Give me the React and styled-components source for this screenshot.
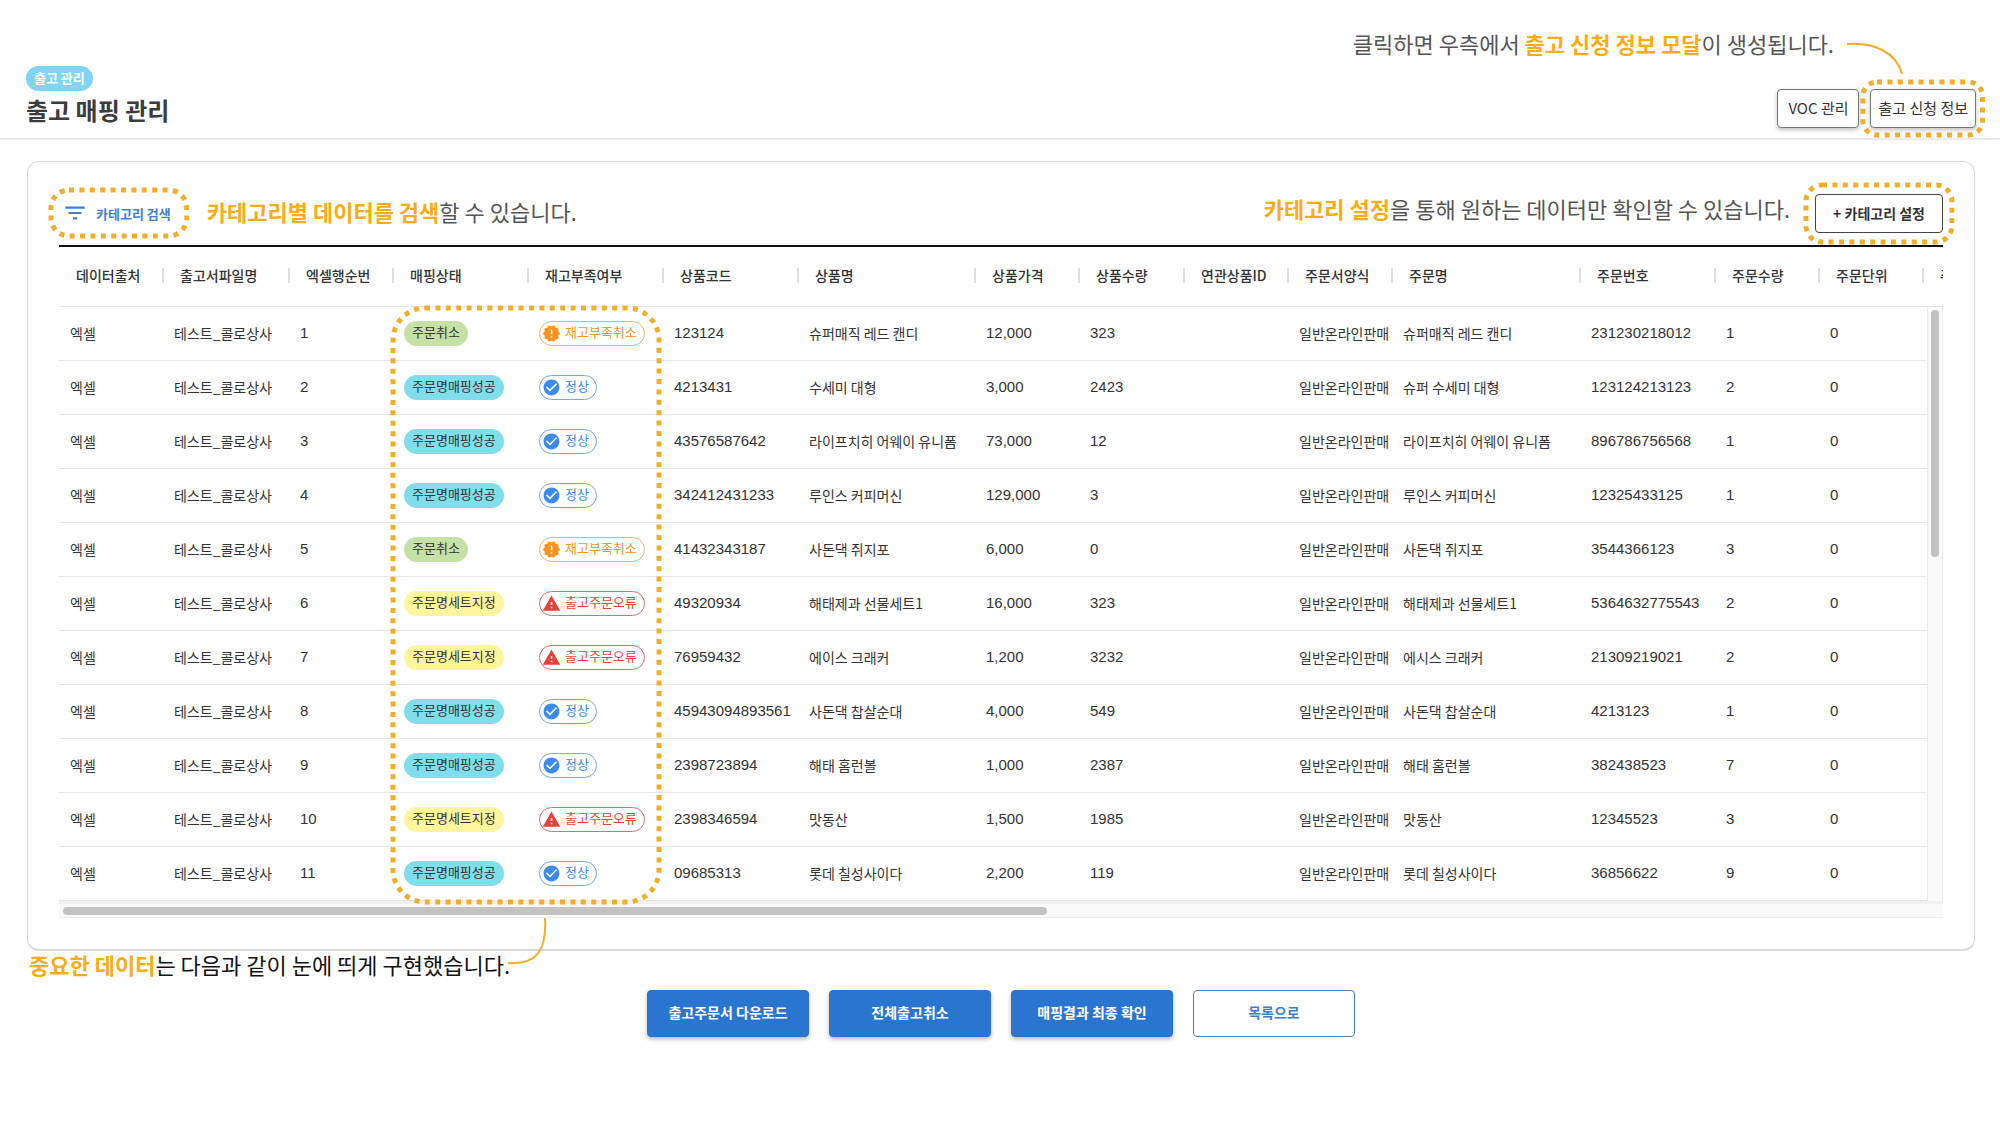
import React from 'react'
import styled, { createGlobalStyle } from 'styled-components'
import { MdCheckCircle, MdFilterList, MdNewReleases, MdWarning } from 'react-icons/md'

const colors = {
  text: '#333333',
  note: '#555555',
  accent: '#fbac14',
  dots: '#f0ae2b',
  primary: '#2a75d0',
  line: '#e6e6e8',
  track: '#fafafa',
  thumb: '#c3c3c3'
}

const columns = [
  { key: 'source', label: '데이터출처', width: 104 },
  { key: 'file', label: '출고서파일명', width: 126 },
  { key: 'row', label: '엑셀행순번', width: 104, numeric: true },
  { key: 'mapping', label: '매핑상태', width: 135, chip: true },
  { key: 'stock', label: '재고부족여부', width: 135, chip: true },
  { key: 'code', label: '상품코드', width: 135, numeric: true },
  { key: 'product', label: '상품명', width: 177 },
  { key: 'price', label: '상품가격', width: 104, numeric: true },
  { key: 'quantity', label: '상품수량', width: 105, numeric: true },
  { key: 'related', label: '연관상품ID', width: 104, numeric: true },
  { key: 'form', label: '주문서양식', width: 104 },
  { key: 'order', label: '주문명', width: 188 },
  { key: 'orderNo', label: '주문번호', width: 135, numeric: true },
  { key: 'orderQty', label: '주문수량', width: 104, numeric: true },
  { key: 'unit', label: '주문단위', width: 104, numeric: true },
  { key: 'orderPrice', label: '주문가격', width: 104, numeric: true }
]

const mappings = {
  cancel: { label: '주문취소', color: '#c5e1a5' },
  success: { label: '주문명매핑성공', color: '#80deea' },
  set: { label: '주문명세트지정', color: '#fff59d' }
}

const stocks = {
  short: { label: '재고부족취소', color: '#f7941d', border: '#f0b070', Icon: MdNewReleases },
  normal: { label: '정상', color: '#3b8beb', border: '#7ba6e0', Icon: MdCheckCircle },
  error: { label: '출고주문오류', color: '#e8413c', border: '#e06a70', Icon: MdWarning }
}

const rows = [
  ['cancel', 'short', '123124', '슈퍼매직 레드 캔디', '12,000', '323', '슈퍼매직 레드 캔디', '231230218012', '1'],
  ['success', 'normal', '4213431', '수세미 대형', '3,000', '2423', '슈퍼 수세미 대형', '123124213123', '2'],
  ['success', 'normal', '43576587642', '라이프치히 어웨이 유니폼', '73,000', '12', '라이프치히 어웨이 유니폼', '896786756568', '1'],
  ['success', 'normal', '342412431233', '루인스 커피머신', '129,000', '3', '루인스 커피머신', '12325433125', '1'],
  ['cancel', 'short', '41432343187', '사돈댁 쥐지포', '6,000', '0', '사돈댁 쥐지포', '3544366123', '3'],
  ['set', 'error', '49320934', '해태제과 선물세트1', '16,000', '323', '해태제과 선물세트1', '5364632775543', '2'],
  ['set', 'error', '76959432', '에이스 크래커', '1,200', '3232', '에시스 크래커', '21309219021', '2'],
  ['success', 'normal', '45943094893561', '사돈댁 찹살순대', '4,000', '549', '사돈댁 찹살순대', '4213123', '1'],
  ['success', 'normal', '2398723894', '해태 홈런볼', '1,000', '2387', '해태 홈런볼', '382438523', '7'],
  ['set', 'error', '2398346594', '맛동산', '1,500', '1985', '맛동산', '12345523', '3'],
  ['success', 'normal', '09685313', '롯데 칠성사이다', '2,200', '119', '롯데 칠성사이다', '36856622', '9']
].map(([mapping, stock, code, product, price, quantity, order, orderNo, orderQty], i) => ({
  source: '엑셀',
  file: '테스트_콜로상사',
  row: String(i + 1),
  form: '일반온라인판매',
  unit: '0',
  mapping,
  stock,
  code,
  product,
  price,
  quantity,
  order,
  orderNo,
  orderQty
}))

const Highlight = ({ radius }) => (
  <Dots aria-hidden='true'>
    <rect width='100%' height='100%' rx={radius} />
  </Dots>
)

const StockChip = ({ type }) => {
  const { label, color, border, Icon } = stocks[type]
  return (
    <OutlineChip color={color} $border={border}>
      <Icon size={19} />
      <span>{label}</span>
    </OutlineChip>
  )
}

const renderCell = (key, row) => {
  if (key === 'mapping') {
    return <Chip $bg={mappings[row.mapping].color}>{mappings[row.mapping].label}</Chip>
  }
  if (key === 'stock') {
    return <StockChip type={row.stock} />
  }
  return row[key]
}

const App = () => (
  <React.Fragment>
    <GlobalStyle />
    <Header>
      <Heading>
        <Badge>출고 관리</Badge>
        <Title>출고 매핑 관리</Title>
      </Heading>
      <HeaderSide>
        <HeaderNote>
          클릭하면 우측에서 <b>출고 신청 정보 모달</b>이 생성됩니다.
          <HeaderCurve viewBox='0 0 58 34' aria-hidden='true'>
            <path d='M1 2C28 0 50 10 56 32' />
          </HeaderCurve>
        </HeaderNote>
        <HeaderActions>
          <RaisedButton type='button'>VOC 관리</RaisedButton>
          <Marked $gap='7px'>
            <RaisedButton type='button'>출고 신청 정보</RaisedButton>
            <Highlight radius={14} />
          </Marked>
        </HeaderActions>
      </HeaderSide>
    </Header>
    <main>
      <Card>
        <Toolbar>
          <FilterMark $gap='4px'>
            <FilterButton type='button'>
              <MdFilterList size={26} />
              카테고리 검색
            </FilterButton>
            <Highlight radius={18} />
          </FilterMark>
          <Note $line='34px'><b>카테고리별 데이터를 검색</b>할 수 있습니다.</Note>
          <ToolbarSide>
            <Note $line='28px'><b>카테고리 설정</b>을 통해 원하는 데이터만 확인할 수 있습니다.</Note>
            <Marked $gap='9px'>
              <SettingButton type='button'>+ 카테고리 설정</SettingButton>
              <Highlight radius={16} />
            </Marked>
          </ToolbarSide>
        </Toolbar>
        <Grid>
          <Table>
            <colgroup>
              {columns.map(({ key, width }) => <col key={key} width={width} />)}
            </colgroup>
            <thead>
              <tr>
                {columns.map(({ key, label }) => (
                  <HeadCell key={key} scope='col'><HeadLabel>{label}</HeadLabel></HeadCell>
                ))}
              </tr>
            </thead>
            <tbody>
              {rows.map(row => (
                <tr key={row.row}>
                  {columns.map(({ key, numeric, chip }) => (
                    <Cell key={key} $numeric={numeric} $chip={chip}>{renderCell(key, row)}</Cell>
                  ))}
                </tr>
              ))}
            </tbody>
          </Table>
          <VerticalTrack><VerticalThumb /></VerticalTrack>
          <HorizontalTrack><HorizontalThumb /></HorizontalTrack>
        </Grid>
        <StatusMark><Highlight radius={32} /></StatusMark>
      </Card>
      <FooterNote>
        <b>중요한 데이터</b>는 다음과 같이 눈에 띄게 구현했습니다.
        <FooterCurve viewBox='0 0 40 48' aria-hidden='true'>
          <path d='M0 46C28 48 39 34 37 1' />
        </FooterCurve>
      </FooterNote>
      <Actions>
        <ActionButton type='button'>출고주문서 다운로드</ActionButton>
        <ActionButton type='button'>전체출고취소</ActionButton>
        <ActionButton type='button'>매핑결과 최종 확인</ActionButton>
        <ActionButton type='button' $outline>목록으로</ActionButton>
      </Actions>
    </main>
  </React.Fragment>
)

export default App

// STYLES
const GlobalStyle = createGlobalStyle`
  * {
    box-sizing: border-box;
  }
  body {
    margin: 0;
    background: #ffffff;
    color: ${colors.text};
    font-family: 'Noto Sans CJK KR', sans-serif;
    font-size: 14px;
  }
  button {
    font-family: inherit;
    cursor: pointer;
  }
`

const Header = styled.header`
  display: flex;
  justify-content: space-between;
  align-items: flex-end;
  padding: 29px 24px 10px 26px;
  border-bottom: 2px solid #ebebed;
`

const Heading = styled.div`
  display: flex;
  flex-direction: column;
  align-items: flex-start;
`

const Badge = styled.span`
  padding: 0 8px 2px;
  border-radius: 13px;
  background: #7fd4f7;
  color: #ffffff;
  font-size: 13px;
  font-weight: 700;
  line-height: 23px;
`

const Title = styled.h1`
  margin: 0;
  color: #3c3c3c;
  font-size: 24px;
  line-height: 37px;
`

const HeaderSide = styled.div`
  display: flex;
  flex-direction: column;
  align-items: flex-end;
  gap: 32px;
`

const Note = styled.p`
  margin: 0;
  color: ${colors.note};
  font-size: 22px;
  line-height: ${props => props.$line};
  white-space: nowrap;
  b {
    color: ${colors.accent};
  }
`

const HeaderNote = styled(Note).attrs({ $line: '28px' })`
  position: relative;
  margin-right: 142px;
`

const Curve = styled.svg`
  position: absolute;
  fill: none;
  stroke: ${colors.dots};
  stroke-width: 2;
`

const HeaderCurve = styled(Curve)`
  top: 13px;
  left: calc(100% + 12px);
  width: 58px;
  height: 34px;
`

const HeaderActions = styled.div`
  display: flex;
  gap: 11px;
`

const Marked = styled.div`
  position: relative;
  > svg {
    top: -${props => props.$gap};
    left: -${props => props.$gap};
    width: calc(100% + ${props => props.$gap} * 2);
    height: calc(100% + ${props => props.$gap} * 2);
  }
`

const FilterMark = styled(Marked)`
  margin-left: -4px;
`

const Dots = styled.svg`
  position: absolute;
  overflow: visible;
  pointer-events: none;
  fill: none;
  stroke: ${colors.dots};
  stroke-width: 5;
  stroke-dasharray: 5 5.4;
`

const RaisedButton = styled.button`
  min-width: 82px;
  height: 39px;
  padding: 0 7px 2px;
  border: 1px solid #777777;
  border-radius: 4px;
  background: #ffffff;
  box-shadow: 0 2px 4px rgba(0, 0, 0, .25);
  color: ${colors.text};
  font-size: 15px;
`

const Card = styled.section`
  position: relative;
  margin: 21px 25px 0 27px;
  padding: 32px 31px 31px;
  border: 1px solid #d9d9dc;
  border-bottom-width: 2px;
  border-radius: 12px;
`

const Toolbar = styled.div`
  display: flex;
  align-items: flex-start;
  gap: 24px;
  padding-bottom: 12px;
`

const FilterButton = styled.button`
  display: flex;
  align-items: center;
  gap: 8px;
  height: 38px;
  padding: 0 12px 0 7px;
  border: 0;
  background: none;
  color: #3f7fd6;
  font-size: 13px;
  font-weight: 700;
`

const ToolbarSide = styled.div`
  display: flex;
  align-items: flex-start;
  gap: 25px;
  margin-left: auto;
`

const SettingButton = styled.button`
  height: 39px;
  padding: 0 17px 2px;
  border: 1px solid #444444;
  border-radius: 4px;
  background: #ffffff;
  color: ${colors.text};
  font-size: 14px;
  font-weight: 700;
`

const Grid = styled.div`
  position: relative;
  overflow: hidden;
  border-top: 2px solid #111111;
`

const Table = styled.table`
  width: 1964px;
  table-layout: fixed;
  border-collapse: separate;
  border-spacing: 0;
`

const HeadCell = styled.th`
  height: 60px;
  padding: 0 0 2px 17px;
  border-bottom: 1px solid ${colors.line};
  font-weight: 500;
  text-align: left;
`

const HeadLabel = styled.span`
  display: block;
  margin-right: -1px;
  border-right: 2px solid #dfdfe2;
  line-height: 15px;
  white-space: nowrap;
`

const Cell = styled.td`
  height: 54px;
  padding: ${props => props.$chip ? '0 0 0 11px' : '0 0 2px 11px'};
  border-bottom: 1px solid ${colors.line};
  font-family: ${props => props.$numeric ? `'Liberation Sans', sans-serif` : 'inherit'};
  font-size: ${props => props.$numeric ? '15px' : '14px'};
  white-space: nowrap;
`

const Chip = styled.span`
  display: inline-block;
  padding: 0 8px 3px;
  border-radius: 13px;
  background: ${props => props.$bg};
  font-size: 13px;
  line-height: 22px;
  vertical-align: middle;
`

const OutlineChip = styled.span`
  display: inline-flex;
  align-items: center;
  gap: 4px;
  height: 25px;
  padding: 0 7px 0 2px;
  border: 1px solid ${props => props.$border};
  border-radius: 13px;
  color: ${props => props.color};
  font-size: 13px;
  vertical-align: middle;
  span {
    padding-bottom: 3px;
    line-height: 20px;
  }
`

const VerticalTrack = styled.div`
  position: absolute;
  top: 60px;
  right: 0;
  bottom: 17px;
  width: 16px;
  padding: 3px;
  border-left: 1px solid #ececec;
  border-right: 1px solid #ececec;
  background: ${colors.track};
`

const VerticalThumb = styled.div`
  height: 42%;
  border-radius: 4px;
  background: ${colors.thumb};
`

const HorizontalTrack = styled.div`
  height: 17px;
  padding: 3px 4px;
  border-top: 3px solid #f0f0f0;
  border-bottom: 1px solid #ececec;
  background: ${colors.track};
`

const HorizontalThumb = styled.div`
  width: 984px;
  max-width: 53%;
  height: 8px;
  border-radius: 4px;
  background: ${colors.thumb};
`

const StatusMark = styled.div`
  position: absolute;
  top: 146px;
  left: 365px;
  width: 266px;
  height: 594px;
  pointer-events: none;
  > svg {
    width: 100%;
    height: 100%;
  }
`

const FooterNote = styled(Note).attrs({ $line: '26px' })`
  position: relative;
  width: fit-content;
  margin-left: 29px;
  color: #111111;
`

const FooterCurve = styled(Curve)`
  bottom: 12px;
  left: calc(100% - 2px);
  width: 40px;
  height: 48px;
`

const Actions = styled.div`
  display: flex;
  justify-content: center;
  gap: 20px;
  padding: 13px 0 88px 2px;
`

const ActionButton = styled.button`
  width: 162px;
  height: 47px;
  padding: 0 0 3px;
  border: 1px solid ${props => props.$outline ? '#4a80c2' : colors.primary};
  border-radius: 4px;
  background: ${props => props.$outline ? '#ffffff' : colors.primary};
  box-shadow: ${props => props.$outline ? 'none' : '0 2px 4px rgba(0, 0, 0, .3)'};
  color: ${props => props.$outline ? '#3f7fc6' : '#ffffff'};
  font-size: 14px;
  font-weight: 700;
`
